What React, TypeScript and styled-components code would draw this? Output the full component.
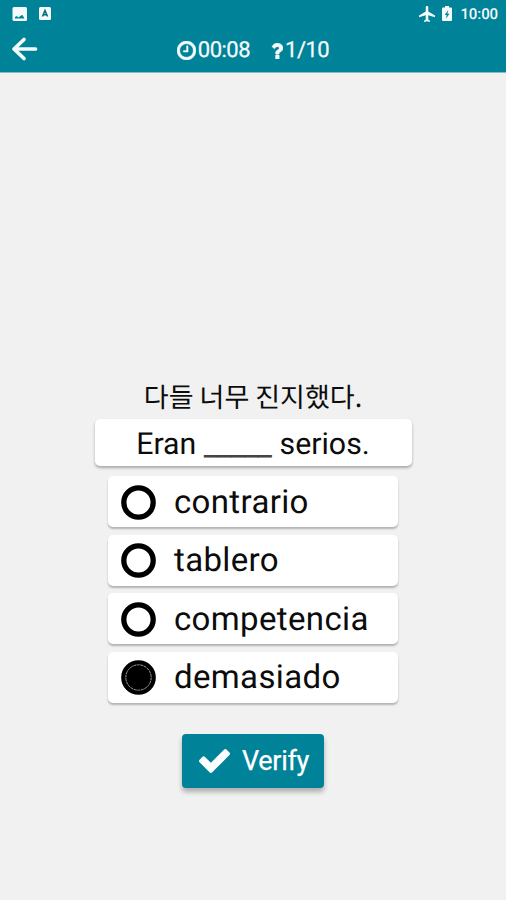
import React from "react";
import styled, { createGlobalStyle } from "styled-components";

const GlobalStyle = createGlobalStyle`
  * { box-sizing: border-box; }
  body { margin: 0; background: #f1f1f1; font-family: Roboto, "Noto Sans CJK KR", sans-serif; color: #0c0c0c; text-rendering: geometricPrecision; }
`;

const Screen = styled.div`
  display: flex;
  flex-direction: column;
  height: 900px;
  width: 100%;
  overflow: hidden;
`;

const Header = styled.header`
  height: 73px;
  flex: none;
  background: #008299;
  border-bottom: 1px solid #83bdc8;
  color: #f4fbfc;
`;

const StatusBar = styled.div`
  height: 27px;
  display: flex;
  align-items: center;
  justify-content: space-between;
  padding: 0 8px 0 12px;
`;

const StatusGroup = styled.div<{ $gap: number }>`
  display: flex;
  align-items: center;
  gap: ${(p) => p.$gap}px;
  svg { display: block; }
`;

const ClockText = styled.span`
  font-size: 15px;
  line-height: 20px;
  font-weight: 500;
  margin-left: 1px;
  letter-spacing: -0.1px;
`;

const Toolbar = styled.div`
  height: 45px;
  display: grid;
  grid-template-columns: 60px 1fr 60px;
  align-items: center;
`;

const BackButton = styled.button`
  border: 0;
  padding: 0 0 1px 11px;
  background: none;
  color: inherit;
  display: flex;
`;

const Stats = styled.div`
  display: flex;
  justify-content: center;
  gap: 21px;
  padding-top: 2px;
`;

const Stat = styled.div`
  display: flex;
  align-items: center;
  gap: 2px;
  font-size: 22px;
  line-height: 26px;
  letter-spacing: -0.5px;
  -webkit-text-stroke: 0.25px currentColor;
  svg { display: block; }
`;

const StatValue = styled.span`
  padding-top: 1px;
`;

const Quiz = styled.main`
  flex: 1;
  display: flex;
  flex-direction: column;
  align-items: center;
  padding-top: 305px;
`;

const Prompt = styled.div`
  height: 41px;
  font-size: 27px;
  line-height: 36px;
  white-space: nowrap;
  font-family: "Noto Sans CJK KR", sans-serif;
  letter-spacing: 0;
`;

const Sentence = styled.div`
  width: 317px;
  height: 47px;
  background: #fff;
  border-radius: 5px;
  box-shadow: 0 2px 3px rgba(0, 0, 0, 0.3);
  display: flex;
  justify-content: center;
  font-size: 30.3px;
  line-height: 52px;
  white-space: pre;
`;

const Blank = styled.span`
  font-size: 32px;
  letter-spacing: -1px;
  margin: -1px 1px 0 0;
  color: #444;
`;

const Options = styled.div`
  display: flex;
  flex-direction: column;
  gap: 7.5px;
  margin: 10px 0 31px;
`;

const Option = styled.label`
  width: 290px;
  height: 51px;
  display: flex;
  align-items: center;
  gap: 18px;
  padding: 1px 0 0 13px;
  background: #fff;
  border-radius: 5px;
  box-shadow: 0 2px 2px rgba(0, 0, 0, 0.26);
  font-size: 33px;
  line-height: 52px;
  letter-spacing: 0.35px;
  svg { display: block; flex: none; }
`;

const OptionText = styled.span`
  padding-top: 1px;
`;

const VerifyButton = styled.button`
  width: 142px;
  height: 54px;
  border: 0;
  border-radius: 4px;
  background: #008299;
  box-shadow: 0 4px 5px rgba(0, 0, 0, 0.28);
  color: #fff;
  display: flex;
  align-items: center;
  gap: 12px;
  padding: 1px 0 0 17px;
  font: 400 27px/54px Roboto, sans-serif;
  letter-spacing: -0.3px;
  -webkit-text-stroke: 0.25px currentColor;
  svg { display: block; }
`;

const PictureIcon = () => (
  <svg width="15" height="14" viewBox="0 0 15 14">
    <rect x="0.5" width="14.5" height="14" rx="1.5" fill="#f4fbfc" />
    <path d="M3 11.5V10l1.500-1L6.500 10.500 9 8.500l1.500-.5 2 3.500Z" fill="#008299" />
  </svg>
);

const LetterIcon = () => (
  <svg width="12" height="13" viewBox="0 0 12 13">
    <rect width="12" height="13" rx="1.5" fill="#f4fbfc" />
    <path d="M3.5 9.5 6 3.5l2.5 6M4.3 7.7h3.4" fill="none" stroke="#00677c" strokeWidth="1.5" />
  </svg>
);

const PlaneIcon = () => (
  <svg width="16" height="16" viewBox="2 2 19 20" fill="currentColor" preserveAspectRatio="none">
    <path d="M21 16v-2l-8-5V3.500c0-.83-.67-1.500-1.500-1.500S10 2.670 10 3.500V9l-8 5v2l8-2.500V19l-2 1.500V22l3.500-1 3.500 1v-1.500L13 19v-5.500l8 2.500z" />
  </svg>
);

const BatteryIcon = () => (
  <svg width="10" height="15" viewBox="0 0 10 15">
    <path d="M3 0h4v1.500h2q1 0 1 1V14q0 1-1 1H1q-1 0-1-1V2.500q0-1 1-1h2Z" fill="currentColor" />
    <path d="M6.200 4 2.700 9h2L4 12.800 7.400 7.700h-2Z" fill="#008299" />
  </svg>
);

const BackIcon = () => (
  <svg width="28" height="26" viewBox="0 0 28 26" fill="none" stroke="currentColor" strokeWidth="3.700" strokeLinecap="round" strokeLinejoin="round">
    <path d="M13 3.500 3 13l10 9.500M3.500 13H24.500" />
  </svg>
);

const ClockIcon = () => (
  <svg width="19" height="19" viewBox="128 128 1536 1536" fill="currentColor">
    <path stroke="currentColor" strokeWidth="35" d="M1024 544v448q0 14-9 23t-23 9h-320q-14 0-23-9t-9-23v-64q0-14 9-23t23-9h224v-352q0-14 9-23t23-9h64q14 0 23 9t9 23zm416 352q0-148-73-273t-198-198-273-73-273 73-198 198-73 273 73 273 198 198 273 73 273-73 198-198 73-273zm224 0q0 209-103 385.500t-279.500 279.500-385.500 103-385.500-103-279.500-279.500-103-385.500 103-385.500 279.500-279.500 385.500-103 385.500 103 279.500 279.500 103 385.500z" />
  </svg>
);

const QuestionIcon = () => (
  <svg width="12" height="16" viewBox="387 256 1018 1280" fill="currentColor" preserveAspectRatio="none">
    <path stroke="currentColor" strokeWidth="35" d="M1088 1256v240q0 16-12 28t-28 12h-240q-16 0-28-12t-12-28v-240q0-16 12-28t28-12h240q16 0 28 12t12 28zm316-600q0 54-15.500 101t-35 76.500-55 59.500-57.500 43.500-61 35.500q-41 23-68.500 65t-27.500 67q0 17-12 32.500t-28 15.500h-240q-15 0-25.500-18.500t-10.500-37.500v-45q0-83 65-156.500t143-108.500q59-27 84-56t25-76q0-42-46.500-74t-107.500-32q-65 0-108 29-35 25-107 115-13 16-31 16-12 0-25-8l-164-125q-13-10-15.500-25t5.500-28q160-266 464-266 80 0 161 31t146 83 106 127.500 41 158.500z" />
  </svg>
);

const CheckIcon = () => (
  <svg width="31" height="24" viewBox="121 334 1550 1188" fill="currentColor">
    <path d="M1671 566q0 40-28 68l-724 724-136 136q-28 28-68 28t-68-28l-136-136-362-362q-28-28-28-68t28-68l136-136q28-28 68-28t68 28l294 295 656-657q28-28 68-28t68 28l136 136q28 28 28 68z" />
  </svg>
);

const RadioIcon = ({ checked }: { checked: boolean }) => (
  <svg width="35" height="35" viewBox="0 0 35 35">
    <circle cx="17.500" cy="17.500" r="14.700" fill="none" stroke="#000" strokeWidth="5.300" />
    {checked && (
      <>
        <circle cx="17.500" cy="17.500" r="13.500" fill="#000" />
        <circle cx="17.500" cy="17.500" r="12.700" fill="none" stroke="#aaa" strokeWidth="0.900" strokeDasharray="3 0.600" />
      </>
    )}
  </svg>
);

const answers = ["contrario", "tablero", "competencia", "demasiado"];
const selected = "demasiado";

export default function App() {
  return (
    <Screen>
      <GlobalStyle />
      <Header>
        <StatusBar>
          <StatusGroup $gap={12}>
            <PictureIcon />
            <LetterIcon />
          </StatusGroup>
          <StatusGroup $gap={7}>
            <PlaneIcon />
            <BatteryIcon />
            <ClockText>10:00</ClockText>
          </StatusGroup>
        </StatusBar>
        <Toolbar>
          <BackButton aria-label="Back"><BackIcon /></BackButton>
          <Stats>
            <Stat><ClockIcon /><StatValue>00:08</StatValue></Stat>
            <Stat><QuestionIcon /><StatValue>1/10</StatValue></Stat>
          </Stats>
        </Toolbar>
      </Header>
      <Quiz>
        <Prompt>다들 너무 진지했다.</Prompt>
        <Sentence>Eran <Blank>_____</Blank> serios.</Sentence>
        <Options>
          {answers.map((answer) => (
            <Option key={answer}>
              <RadioIcon checked={answer === selected} />
              <OptionText>{answer}</OptionText>
            </Option>
          ))}
        </Options>
        <VerifyButton><CheckIcon />Verify</VerifyButton>
      </Quiz>
    </Screen>
  );
}
